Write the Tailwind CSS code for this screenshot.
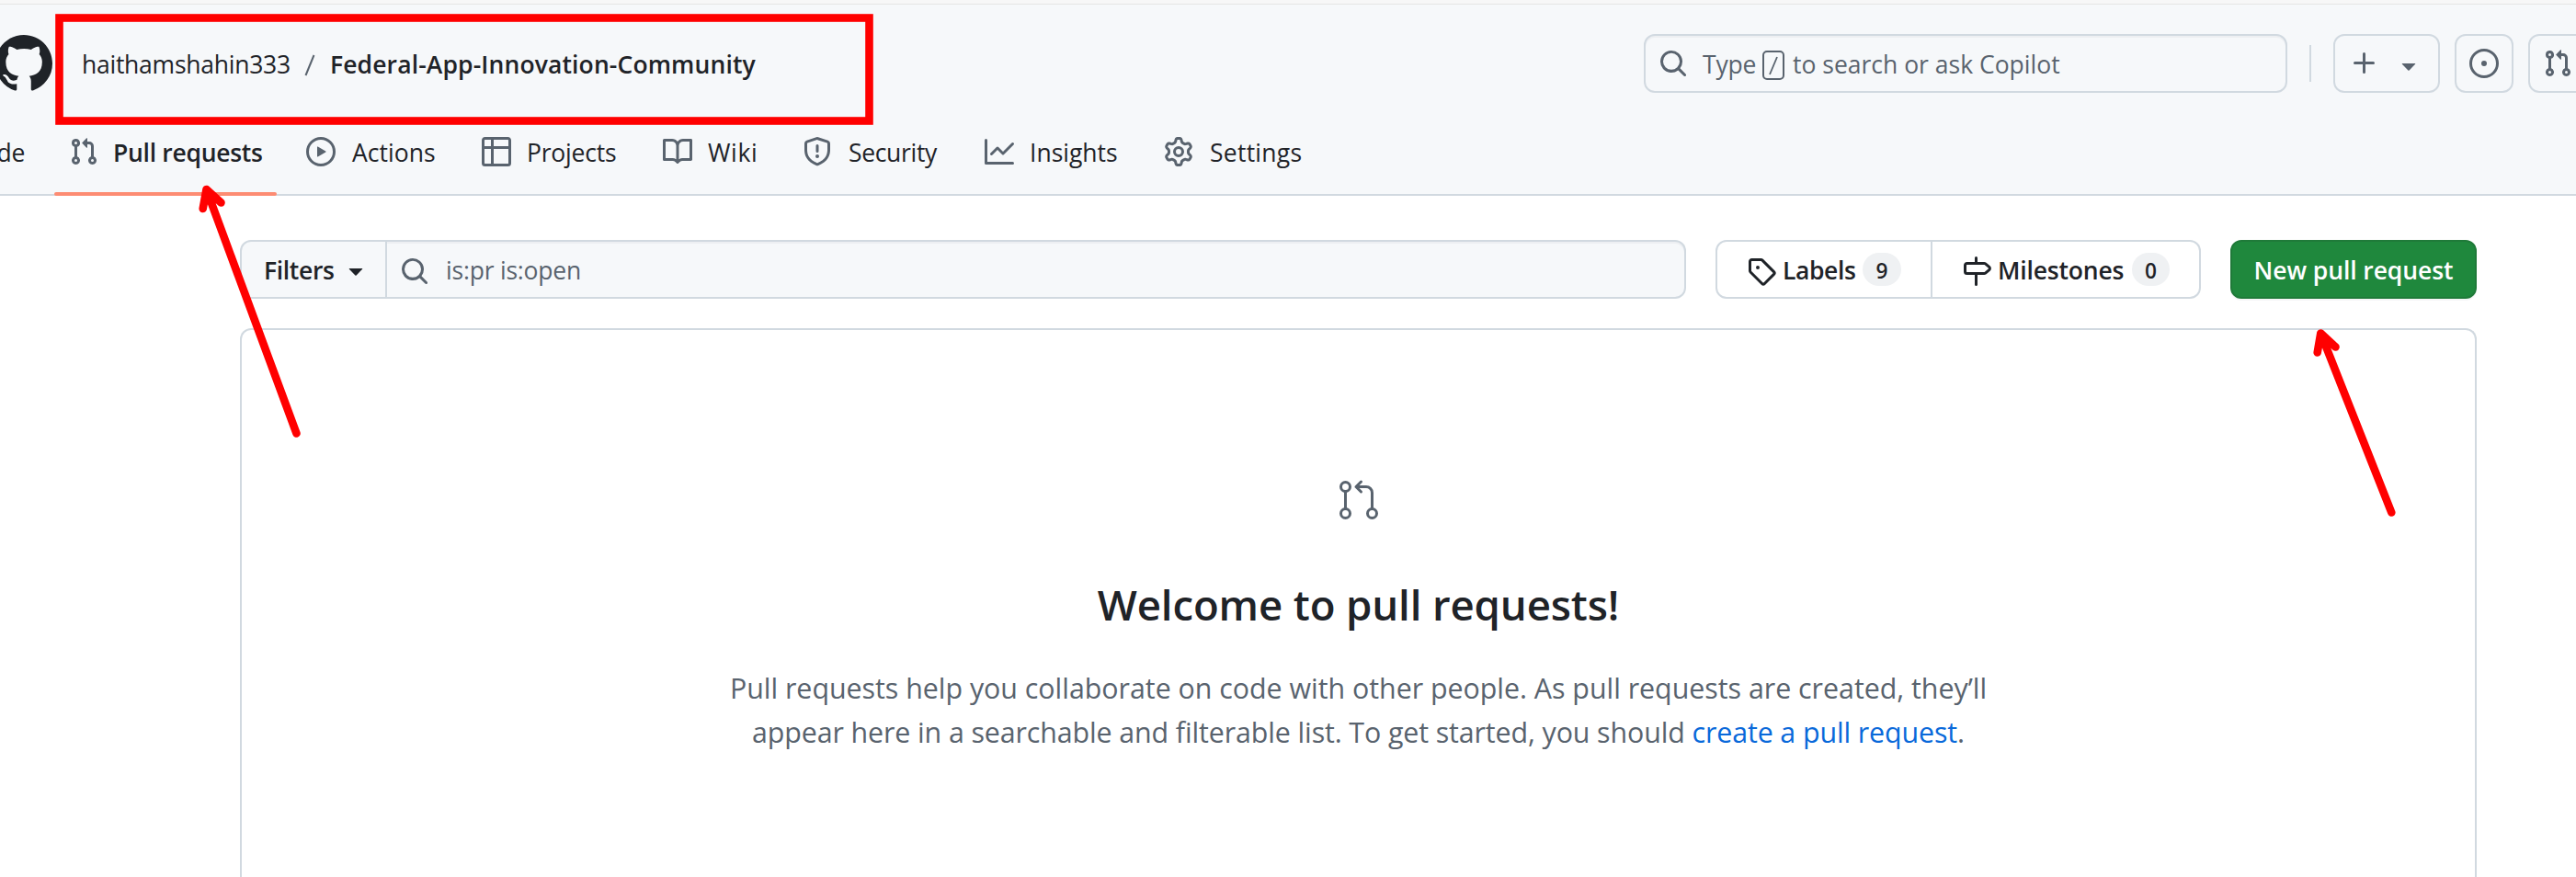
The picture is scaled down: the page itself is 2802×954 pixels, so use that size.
<!DOCTYPE html>
<html lang="en">
<head>
<meta charset="utf-8">
<title>Pull requests · haithamshahin333/Federal-App-Innovation-Community</title>
<script src="https://cdn.jsdelivr.net/npm/@tailwindcss/browser@4"></script>
</head>
<body class="relative flex h-[954px] w-[2802px] flex-col overflow-hidden bg-white font-['Open_Sans','Noto_Sans',sans-serif] text-[26.5px] text-[#1f2328]">

<svg class="hidden" xmlns="http://www.w3.org/2000/svg">
  <symbol id="pr" viewBox="0 0 16 16"><path d="M1.5 3.25a2.25 2.25 0 1 1 3 2.122v5.256a2.251 2.251 0 1 1-1.5 0V5.372A2.25 2.25 0 0 1 1.5 3.25Zm5.677-.177L9.573.677A.25.25 0 0 1 10 .854V2.5h1A2.5 2.5 0 0 1 13.5 5v5.628a2.251 2.251 0 1 1-1.5 0V5a1 1 0 0 0-1-1h-1v1.646a.25.25 0 0 1-.427.177L7.177 3.427a.25.25 0 0 1 0-.354ZM3.75 2.5a.75.75 0 1 0 0 1.5.75.75 0 0 0 0-1.5Zm0 9.5a.75.75 0 1 0 0 1.5.75.75 0 0 0 0-1.5Zm8.25.75a.75.75 0 1 0 1.5 0 .75.75 0 0 0-1.5 0Z"/></symbol>
  <symbol id="search" viewBox="0 0 16 16"><path d="M10.68 11.74a6 6 0 0 1-7.922-8.982 6 6 0 0 1 8.982 7.922l3.04 3.04a.749.749 0 0 1-.326 1.275.749.749 0 0 1-.734-.215ZM11.5 7a4.499 4.499 0 1 0-8.997 0A4.499 4.499 0 0 0 11.5 7Z"/></symbol>
  <symbol id="caret" viewBox="0 0 16 16"><path d="m4.427 7.427 3.396 3.396a.25.25 0 0 0 .354 0l3.396-3.396A.25.25 0 0 0 11.396 7H4.604a.25.25 0 0 0-.177.427Z"/></symbol>
</svg>

<div class="h-[5px] shrink-0 border-b border-[#e5e5e5] bg-[#f7f7f7]"></div>

<header class="flex h-52 shrink-0 flex-col border-b-2 border-[#d1d9e0] bg-[#f6f8fa]">
  <div class="flex h-32 shrink-0 items-center pl-[88px]">
    <svg class="-ml-[93px] size-[62px] shrink-0" viewBox="0 0 16 16" fill="#1f2328"><path d="M8 0c4.42 0 8 3.58 8 8a8.013 8.013 0 0 1-5.45 7.59c-.4.08-.55-.17-.55-.38 0-.27.01-1.13.01-2.2 0-.75-.25-1.23-.54-1.48 1.78-.2 3.65-.88 3.65-3.95 0-.88-.31-1.59-.82-2.15.08-.2.36-1.02-.08-2.12 0 0-.67-.22-2.2.82-.64-.18-1.32-.27-2-.27-.68 0-1.36.09-2 .27-1.53-1.03-2.2-.82-2.2-.82-.44 1.1-.16 1.92-.08 2.12-.51.56-.82 1.28-.82 2.15 0 3.06 1.86 3.75 3.64 3.95-.23.2-.44.55-.51 1.07-.46.21-1.61.55-2.33-.66-.15-.24-.6-.83-1.23-.82-.67.01-.27.38.01.53.34.19.73.9.82 1.13.16.45.68 1.31 2.69.94 0 .67.01 1.3.01 1.49 0 .21-.15.45-.55.38A7.995 7.995 0 0 1 0 8c0-4.42 3.58-8 8-8Z"/></svg>
    <nav class="ml-8 flex w-[1699px] shrink-0 items-center whitespace-nowrap pt-[3px]">
      <span class="w-[242px] tracking-[-0.248px]">haithamshahin333</span>
      <svg class="h-6 w-3 shrink-0" viewBox="0 0 12 24"><path d="M10.5 1 1.5 23" stroke="#59636e" stroke-width="2" fill="none"/></svg>
      <span class="ml-4 font-semibold tracking-[0.117px]">Federal-App-Innovation-Community</span>
    </nav>
    <div class="flex h-16 w-[700px] shrink-0 items-center whitespace-nowrap rounded-xl border-2 border-[#d1d9e0] pl-3.5 text-[#59636e] shadow-[inset_0_2px_0_#1f23280a]">
      <svg class="size-8" fill="currentColor"><use href="#search"/></svg>
      <span class="ml-4 w-[65px] pt-[3px] tracking-[-0.2px]">Type</span>
      <span class="mt-1 flex h-8 w-6 items-center justify-center rounded-[5px] border-2 border-[#59636e]"><svg class="h-[21px] w-2.5" viewBox="0 0 10 21"><path d="M9 1 1 20" stroke="#59636e" stroke-width="1.8" fill="none"/></svg></span>
      <span class="ml-[9px] pt-[3px]">to search or ask Copilot</span>
    </div>
    <div class="ml-6 h-10 w-0.5 shrink-0 bg-[#d1d9e0]"></div>
    <div class="ml-6 flex h-16 w-[116px] shrink-0 items-center gap-4 rounded-xl border-2 border-[#d1d9e0] pl-4 text-[#59636e]">
      <svg class="size-8" viewBox="0 0 16 16" fill="currentColor"><path d="M7.75 2a.75.75 0 0 1 .75.75V7h4.25a.75.75 0 0 1 0 1.5H8.5v4.25a.75.75 0 0 1-1.5 0V8.5H2.75a.75.75 0 0 1 0-1.5H7V2.75A.75.75 0 0 1 7.75 2Z"/></svg>
      <svg class="mt-1 size-8" fill="currentColor"><use href="#caret"/></svg>
    </div>
    <div class="ml-4 flex size-16 shrink-0 items-center justify-center rounded-xl border-2 border-[#d1d9e0] text-[#59636e]">
      <svg class="size-8" viewBox="0 0 16 16" fill="currentColor"><path d="M8 9.5a1.5 1.5 0 1 0 0-3 1.5 1.5 0 0 0 0 3Z"/><path d="M8 0a8 8 0 1 1 0 16A8 8 0 0 1 8 0ZM1.5 8a6.5 6.5 0 1 0 13 0 6.5 6.5 0 0 0-13 0Z"/></svg>
    </div>
    <div class="ml-4 flex size-16 shrink-0 items-center justify-center rounded-xl border-2 border-[#d1d9e0] text-[#59636e]">
      <svg class="size-8" fill="currentColor"><use href="#pr"/></svg>
    </div>
  </div>

  <nav class="flex h-[78px] shrink-0 items-start whitespace-nowrap">
    <div class="flex w-[27px] items-start justify-end overflow-hidden pt-4 leading-[34px] tracking-[-0.3px]">Code</div>
    <div class="ml-8 flex h-20 w-[242px] flex-col">
      <div class="flex h-[76px] items-start gap-4 px-4 pt-4">
        <svg class="size-8 shrink-0 text-[#59636e]" fill="currentColor"><use href="#pr"/></svg>
        <span class="w-[162px] leading-[34px] font-semibold tracking-[-0.29px]">Pull requests</span>
      </div>
      <div class="h-1 shrink-0 rounded-sm bg-[#fd8c73]"></div>
    </div>
    <div class="flex items-start gap-4 pt-4 pl-8">
      <svg class="size-8 shrink-0" viewBox="0 0 16 16" fill="#59636e"><path d="M8 0a8 8 0 1 1 0 16A8 8 0 0 1 8 0ZM1.5 8a6.5 6.5 0 1 0 13 0 6.5 6.5 0 0 0-13 0Zm4.879-2.773 4.264 2.559a.25.25 0 0 1 0 .428l-4.264 2.559A.25.25 0 0 1 6 10.559V5.442a.25.25 0 0 1 .379-.215Z"/></svg>
      <span class="w-[95px] pl-0.5 leading-[34px] tracking-[0.037px]">Actions</span>
    </div>
    <div class="flex items-start gap-4 pt-4 pl-12">
      <svg class="size-8 shrink-0" viewBox="0 0 16 16" fill="#59636e"><path d="M0 1.75C0 .784.784 0 1.75 0h12.5C15.216 0 16 .784 16 1.75v12.5A1.75 1.75 0 0 1 14.25 16H1.75A1.75 1.75 0 0 1 0 14.25ZM6.5 6.5v8h7.75a.25.25 0 0 0 .25-.25V6.5Zm8-1.5V1.75a.25.25 0 0 0-.25-.25H6.5V5Zm-13 1.5v7.75c0 .138.112.25.25.25H5v-8ZM5 5V1.5H1.75a.25.25 0 0 0-.25.25V5Z"/></svg>
      <span class="w-[101px] pl-px leading-[34px] tracking-[-0.203px]">Projects</span>
    </div>
    <div class="flex items-start gap-4 pt-4 pl-12">
      <svg class="size-8 shrink-0" viewBox="0 0 16 16" fill="#59636e"><path d="M0 1.75A.75.75 0 0 1 .75 1h4.253c1.227 0 2.317.59 3 1.501A3.743 3.743 0 0 1 11.006 1h4.245a.75.75 0 0 1 .75.75v10.5a.75.75 0 0 1-.75.75h-4.507a2.25 2.25 0 0 0-1.591.659l-.622.621a.75.75 0 0 1-1.06 0l-.622-.621A2.25 2.25 0 0 0 5.258 13H.75a.75.75 0 0 1-.75-.75Zm7.251 10.324.004-5.073-.002-2.253A2.25 2.25 0 0 0 5.003 2.5H1.5v9h3.757a3.75 3.75 0 0 1 1.994.574ZM8.755 4.75l-.004 7.322a3.752 3.752 0 0 1 1.992-.572H14.5v-9h-3.495a2.25 2.25 0 0 0-2.25 2.25Z"/></svg>
      <span class="w-[56px] pl-px leading-[34px] tracking-[0.64px]">Wiki</span>
    </div>
    <div class="flex items-start gap-4 pt-4 pl-12">
      <svg class="size-8 shrink-0" viewBox="0 0 16 16" fill="#59636e"><path d="M7.467.133a1.748 1.748 0 0 1 1.066 0l5.25 1.68A1.75 1.75 0 0 1 15 3.48V7c0 1.566-.32 3.182-1.303 4.682-.983 1.498-2.585 2.813-5.032 3.855a1.697 1.697 0 0 1-1.33 0c-2.447-1.042-4.049-2.357-5.032-3.855C1.32 10.182 1 8.566 1 7V3.48a1.755 1.755 0 0 1 1.217-1.667Zm.61 1.429a.25.25 0 0 0-.153 0l-5.25 1.68a.25.25 0 0 0-.174.238V7c0 1.358.275 2.666 1.057 3.86.784 1.194 2.121 2.34 4.366 3.297a.196.196 0 0 0 .154 0c2.245-.956 3.582-2.104 4.366-3.298C13.225 9.666 13.5 8.36 13.5 7V3.48a.251.251 0 0 0-.174-.237l-5.25-1.68ZM8.75 4.75v3a.75.75 0 0 1-1.5 0v-3a.75.75 0 0 1 1.5 0ZM9 10.5a1 1 0 1 1-2 0 1 1 0 0 1 2 0Z"/></svg>
      <span class="w-[102px] pl-0.5 leading-[34px] tracking-[-0.332px]">Security</span>
    </div>
    <div class="flex items-start gap-4 pt-4 pl-12">
      <svg class="size-8 shrink-0" viewBox="0 0 16 16" fill="#59636e"><path d="M1.5 1.75V13.5h13.75a.75.75 0 0 1 0 1.5H.75a.75.75 0 0 1-.75-.75V1.75a.75.75 0 0 1 1.5 0Zm14.28 2.53-5.25 5.25a.75.75 0 0 1-1.06 0L7 7.06 4.28 9.78a.751.751 0 0 1-1.042-.018.751.751 0 0 1-.018-1.042l3.25-3.25a.75.75 0 0 1 1.06 0L10 7.94l4.72-4.72a.751.751 0 0 1 1.042.018.751.751 0 0 1 .018 1.042Z"/></svg>
      <span class="w-[99px] pl-px leading-[34px] tracking-[-0.008px]">Insights</span>
    </div>
    <div class="flex items-start gap-4 pt-4 pl-12">
      <svg class="size-8 shrink-0" viewBox="0 0 16 16" fill="#59636e"><path d="M8 0a8.200 8.200 0 0 1 .701.031C9.444.095 9.990.645 10.160 1.290l.288 1.107c.018.066.079.158.212.224.231.114.454.243.668.386.123.082.233.090.299.071l1.103-.303c.644-.176 1.392.021 1.820.630.270.385.506.792.704 1.218.315.675.111 1.422-.364 1.891l-.814.806c-.049.048-.098.147-.088.294.016.257.016.515 0 .772-.010.147.038.246.088.294l.814.806c.475.469.679 1.216.364 1.891a7.977 7.977 0 0 1-.704 1.217c-.428.610-1.176.807-1.820.630l-1.102-.302c-.067-.019-.177-.011-.300.071a5.909 5.909 0 0 1-.668.386c-.133.066-.194.158-.211.224l-.290 1.106c-.168.646-.715 1.196-1.458 1.260a8.006 8.006 0 0 1-1.402 0c-.743-.064-1.289-.614-1.458-1.260l-.289-1.106c-.018-.066-.079-.158-.212-.224a5.738 5.738 0 0 1-.668-.386c-.123-.082-.233-.090-.299-.071l-1.103.303c-.644.176-1.392-.021-1.820-.630a8.120 8.120 0 0 1-.704-1.218c-.315-.675-.111-1.422.363-1.891l.815-.806c.050-.048.098-.147.088-.294a6.214 6.214 0 0 1 0-.772c.010-.147-.038-.246-.088-.294l-.815-.806C.635 6.045.431 5.298.746 4.623a7.920 7.920 0 0 1 .704-1.217c.428-.610 1.176-.807 1.820-.630l1.102.302c.067.019.177.011.300-.071.214-.143.437-.272.668-.386.133-.066.194-.158.211-.224l.290-1.106C6.009.645 6.556.095 7.299.030 7.530.010 7.764 0 8 0Zm-.571 1.525c-.036.003-.108.036-.137.146l-.289 1.105c-.147.561-.549.967-.998 1.189-.173.086-.340.183-.500.290-.417.278-.970.423-1.529.270l-1.103-.303c-.109-.030-.175.016-.195.045-.220.312-.412.644-.573.990-.014.031-.021.110.059.190l.815.806c.411.406.562.957.530 1.456a4.709 4.709 0 0 0 0 .582c.032.499-.119 1.050-.530 1.456l-.815.806c-.081.080-.073.159-.059.190.162.346.353.677.573.989.020.030.085.076.195.046l1.102-.303c.560-.153 1.113-.008 1.530.270.161.107.328.204.501.290.447.222.850.629.997 1.189l.289 1.105c.029.109.101.143.137.146a6.600 6.600 0 0 0 1.142 0c.036-.003.108-.036.137-.146l.289-1.105c.147-.561.549-.967.998-1.189.173-.086.340-.183.500-.290.417-.278.970-.423 1.529-.270l1.103.303c.109.029.175-.016.195-.045.220-.313.411-.644.573-.990.014-.031.021-.110-.059-.190l-.815-.806c-.411-.406-.562-.957-.530-1.456a4.709 4.709 0 0 0 0-.582c-.032-.499.119-1.050.530-1.456l.815-.806c.081-.080.073-.159.059-.190a6.464 6.464 0 0 0-.573-.989c-.020-.030-.085-.076-.195-.046l-1.102.303c-.560.153-1.113.008-1.530-.270a4.440 4.440 0 0 0-.501-.290c-.447-.222-.850-.629-.997-1.189l-.289-1.105c-.029-.110-.101-.143-.137-.146a6.600 6.600 0 0 0-1.142 0ZM11 8a3 3 0 1 1-6 0 3 3 0 0 1 6 0ZM9.500 8a1.500 1.500 0 1 0-3.001.001A1.500 1.500 0 0 0 9.500 8Z"/></svg>
      <span class="pl-0.5 leading-[34px] tracking-[0.267px]">Settings</span>
    </div>
  </nav>
</header>

<main class="flex min-h-0 flex-1 flex-col pt-12 pr-[108px] pl-[261px]">
  <div class="flex h-16 shrink-0 whitespace-nowrap">
    <div class="flex w-[160px] items-center rounded-l-xl border-2 border-[#d1d9e0] bg-[#f6f8fa] pl-6 font-semibold">
      <span class="w-[84px] pt-[3px] tracking-[-0.347px]">Filters</span>
      <svg class="mt-0.5 size-8 shrink-0" fill="currentColor"><use href="#caret"/></svg>
    </div>
    <div class="flex w-[1413px] items-center rounded-r-xl border-2 border-l-0 border-[#d1d9e0] bg-[#f6f8fa] pl-3.5 text-[#59636e] shadow-[inset_0_2px_0_#1f23280a]">
      <svg class="mt-1 size-8 shrink-0" fill="currentColor"><use href="#search"/></svg>
      <span class="pt-[3px] pl-[18px] tracking-[-0.21px]">is:pr is:open</span>
    </div>
    <div class="ml-8 flex w-[236px] items-center rounded-l-xl border-2 border-[#d1d9e0] pl-8 font-semibold">
      <svg class="mt-1 size-8 shrink-0" viewBox="0 0 16 16" fill="currentColor"><path d="M1 7.775V2.75C1 1.784 1.784 1 2.75 1h5.025c.464 0 .91.184 1.238.513l6.25 6.25a1.75 1.75 0 0 1 0 2.474l-5.026 5.026a1.75 1.75 0 0 1-2.474 0l-6.25-6.25A1.752 1.752 0 0 1 1 7.775Zm1.5 0c0 .066.026.13.073.177l6.25 6.25a.25.25 0 0 0 .354 0l5.025-5.025a.25.25 0 0 0 0-.354l-6.25-6.25a.25.25 0 0 0-.177-.073H2.75a.25.25 0 0 0-.25.25ZM6 5a1 1 0 1 1 0 2 1 1 0 0 1 0-2Z"/></svg>
      <span class="ml-[7px] w-[87px] pt-[3px] tracking-[-0.386px]">Labels</span>
      <span class="flex h-9 w-[42px] items-center justify-center rounded-full bg-[#eff1f3] pt-[3px] text-[22.7px] leading-9">9</span>
    </div>
    <div class="flex w-[292px] items-center rounded-r-xl border-2 border-l-0 border-[#d1d9e0] pl-8 font-semibold">
      <svg class="mt-1 size-8 shrink-0" viewBox="0 0 16 16" fill="currentColor"><path d="M7.75 0a.75.75 0 0 1 .75.75V3h3.634c.414 0 .814.147 1.13.414l2.07 1.75a1.75 1.75 0 0 1 0 2.672l-2.07 1.75a1.75 1.75 0 0 1-1.13.414H8.5v5.25a.75.75 0 0 1-1.5 0V10H2.75A1.75 1.75 0 0 1 1 8.25v-3.5C1 3.784 1.784 3 2.75 3H7V.75A.75.75 0 0 1 7.75 0Zm4.384 8.5a.25.25 0 0 0 .161-.06l2.07-1.75a.248.248 0 0 0 0-.38l-2.07-1.75a.25.25 0 0 0-.161-.06H2.75a.25.25 0 0 0-.25.25v3.5c0 .138.112.25.25.25h9.384Z"/></svg>
      <span class="ml-[7px] w-[146px] pt-[3px] tracking-[-0.18px]">Milestones</span>
      <span class="flex h-9 w-[41px] items-center justify-center rounded-full bg-[#eff1f3] pt-[3px] text-[22.7px] leading-9">0</span>
    </div>
    <div class="ml-8 flex w-[268px] items-center justify-center rounded-xl border-2 border-[#1f7a39] bg-[#1f883d] pt-[3px] font-semibold tracking-[-0.081px] text-white shadow-[0_2px_0_#1f23280a]">New pull request</div>
  </div>

  <section class="mt-8 flex w-[2433px] flex-1 flex-col items-center rounded-t-xl border-2 border-b-0 border-[#d1d9e0] pt-[161px]">
    <svg class="h-12 w-12 shrink-0" viewBox="0 0 24 24" fill="none" stroke="#59636e" stroke-width="1.5" stroke-linecap="round" stroke-linejoin="round"><circle cx="4.75" cy="4.75" r="2.5"/><circle cx="4.75" cy="19.25" r="2.5"/><circle cx="19.25" cy="19.25" r="2.5"/><path d="M4.75 7.5v9M19.25 16.5V8A3.25 3.25 0 0 0 16 4.75h-5.5M13.25 2 10.5 4.75 13.25 7.5"/></svg>
    <h1 class="mt-[53px] whitespace-nowrap text-[45.6px] leading-[72px] font-semibold tracking-[-0.145px]">Welcome to pull requests!</h1>
    <p class="mt-8 whitespace-nowrap text-center text-[30.4px] leading-12 text-[#59636e]"><span class="tracking-[-0.028px]">Pull requests help you collaborate on code with other people. As pull requests are created, they’ll</span><br><span class="tracking-[-0.119px]">appear here in a searchable and filterable list. To get started, you should <a class="text-[#0969da]">create a pull request</a>.</span></p>
  </section>
</main>

<!-- Red annotation marks over the page -->
<svg class="absolute top-0 left-0" width="2802" height="954" viewBox="0 0 2802 954" fill="none" stroke="#ff0000" stroke-width="8.6" stroke-linecap="round" stroke-linejoin="round">
  <rect x="64.5" y="19.5" width="881" height="112" stroke-linejoin="miter"/>
  <path d="M322.5 471.5 224.5 206M220.7 227 224.5 206 240.5 220.5"/>
  <path d="M2601.3 557.5 2524.3 362.5M2520.7 383.5 2524.3 362.5 2540.5 377.5"/>
</svg>
</body>
</html>
